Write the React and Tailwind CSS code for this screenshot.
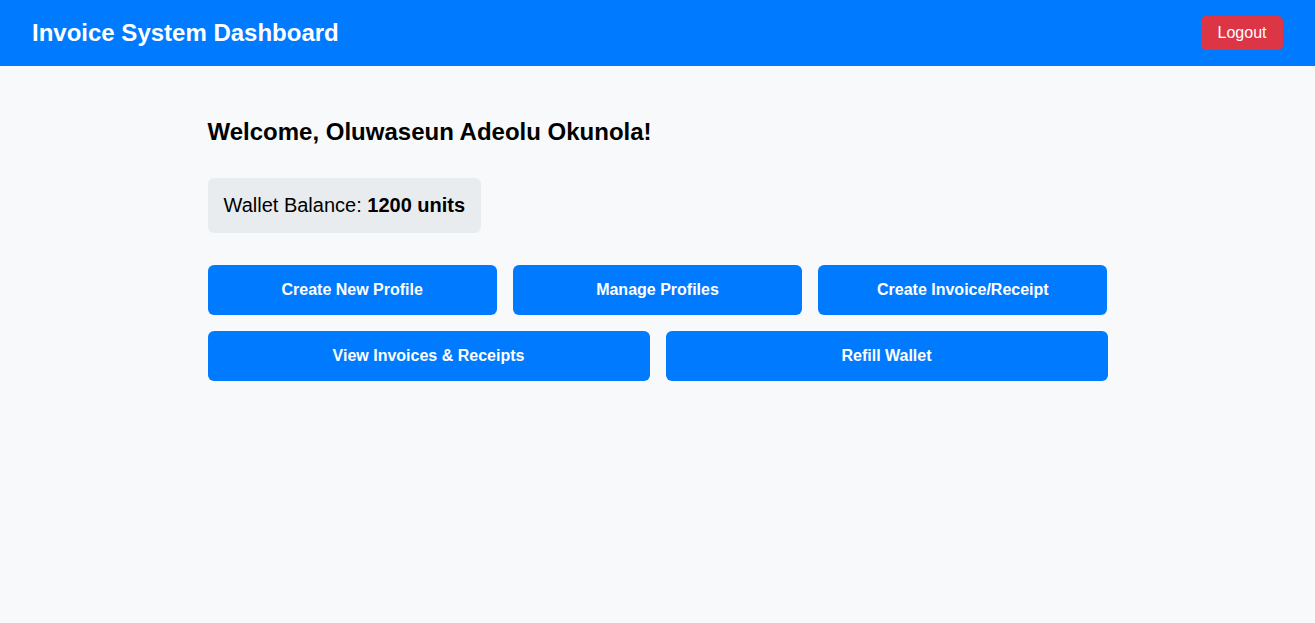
import React from 'react';

const ActionButton = ({ label }) => (
  <button className="flex-1 h-[50px] rounded-[6px] bg-[#007bff] text-white text-base font-bold">
    {label}
  </button>
);

const App = () => {
  return (
    <div className="min-h-[623px] bg-[#f8f9fa] font-['Liberation_Sans',Arial,sans-serif] text-black">

      {/* Header */}
      <header className="h-[66px] bg-[#007bff] px-8 flex items-center justify-between">
        <h1 className="text-2xl leading-[28px] font-bold text-white">Invoice System Dashboard</h1>
        <button className="h-[34px] w-[82px] rounded-[5px] bg-[#dc3545] text-white text-base">
          Logout
        </button>
      </header>

      {/* Main */}
      <main className="max-w-[900px] mx-auto pt-[52px]">
        <h2 className="text-2xl leading-[28px] font-bold mb-8">Welcome, Oluwaseun Adeolu Okunola!</h2>

        <div className="inline-block p-4 rounded-[6px] bg-[#e9ecef] text-xl leading-[23px]">
          Wallet Balance: <strong className="font-bold">1200 units</strong>
        </div>

        <div className="mt-8 flex flex-col gap-4">
          <div className="flex gap-4">
            <ActionButton label="Create New Profile" />
            <ActionButton label="Manage Profiles" />
            <ActionButton label="Create Invoice/Receipt" />
          </div>
          <div className="flex gap-4">
            <ActionButton label="View Invoices & Receipts" />
            <ActionButton label="Refill Wallet" />
          </div>
        </div>
      </main>

    </div>
  );
};

export default App;
